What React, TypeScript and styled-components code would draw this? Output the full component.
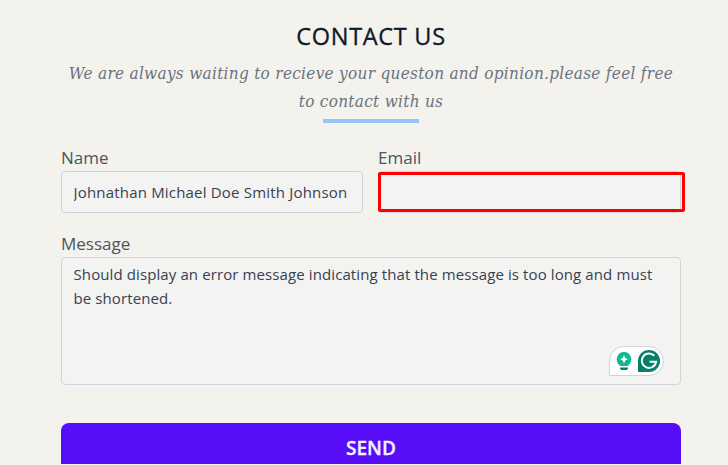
import React from 'react';
import styled, { createGlobalStyle } from 'styled-components';

const GlobalStyle = createGlobalStyle`
  *, *::before, *::after { box-sizing: border-box; }
  body { margin: 0; background: #f3f2ec; overflow: hidden; }
`;

const Page = styled.main`
  height: 464px;
  overflow: hidden;
  padding: 21px 47px 0 61px;
  background: #f3f2ec;
  font-family: 'Open Sans', 'Noto Sans', sans-serif;
`;

const Header = styled.header`
  display: flex;
  flex-direction: column;
  align-items: center;
  height: 126px;
`;

const Title = styled.h1`
  margin: 0;
  font-size: 23.5px;
  font-weight: 500;
  line-height: 30px;
  letter-spacing: 0.7px;
  color: #111827;
  -webkit-text-stroke: 0.3px #111827;
  white-space: nowrap;
`;

const Lead = styled.p`
  margin: 8px 0 0;
  font-family: 'DejaVu Serif Condensed', 'DejaVu Serif', serif;
  font-stretch: condensed;
  font-style: italic;
  font-size: 17px;
  line-height: 28px;
  letter-spacing: 0.3px;
  color: #6b7280;
  text-align: center;
`;

const LeadLine = styled.span`
  display: block;
  white-space: nowrap;
`;

const Underline = styled.div`
  width: 96px;
  height: 4px;
  margin-top: 4px;
  background: #93c5fd;
`;

const Fields = styled.div`
  display: grid;
  grid-template-columns: 302px 303px;
  column-gap: 15px;
  row-gap: 20px;
`;

const Field = styled.div<{ $wide?: boolean }>`
  position: relative;
  grid-column: ${(p) => (p.$wide ? '1 / -1' : 'auto')};
`;

const Label = styled.label`
  display: block;
  height: 24px;
  font-size: 17px;
  line-height: 22px;
  color: #4b5563;
`;

const control = `
  display: block;
  width: 100%;
  border: 1px solid #d1d5db;
  border-radius: 4px;
  background: #f3f3f1;
  color: #374151;
  outline: none;
  font-family: 'Open Sans', 'Noto Sans', sans-serif;
  font-size: 15px;
`;

const Input = styled.input`
  ${control}
  height: 42px;
  padding: 0 11.5px;
  letter-spacing: 0.19px;
`;

const TextArea = styled.textarea`
  ${control}
  height: 128px;
  padding: 4px 11.5px;
  line-height: 24px;
  resize: none;
  overflow: hidden;
  white-space: pre;
  letter-spacing: 0.105px;
`;

const Highlight = styled.div`
  position: absolute;
  left: 0;
  top: 25px;
  width: 307px;
  height: 40px;
  border: 3px solid #fe0000;
  border-radius: 2px;
`;

const Assistant = styled.div`
  position: absolute;
  left: 548px;
  top: 113px;
  width: 55px;
  height: 30px;
  display: flex;
  align-items: center;
  gap: 6px;
  padding-left: 6px;
  border: 1px solid #d1d3de;
  border-radius: 15px 15px 15px 0;
  background: #fff;
`;

const Send = styled.button`
  display: block;
  width: 100%;
  height: 48px;
  margin-top: 38px;
  padding: 0;
  border: 0;
  border-radius: 8px;
  background: #570df8;
  color: #f3f2ff;
  font-family: 'Open Sans', 'Noto Sans', sans-serif;
  font-size: 19px;
  font-weight: 600;
  line-height: 50px;
  -webkit-text-stroke: 0.3px #f3f2ff;
`;

const BulbIcon = () => (
  <svg width="16" height="20" viewBox="0 0 16 20">
    <path d="M8 1a7.4 7.4 0 0 0-4.2 13.4V15h8.4v-.6A7.4 7.4 0 0 0 8 1Z" fill="#0fb792" />
    <path d="M8 4.2 9.3 7 12 8.2 9.3 9.5 8 12.3 6.7 9.5 4 8.2 6.7 7Z" fill="#fff" />
    <path d="M4 16.4h8v1l-1.2 1.7H5.2L4 17.4Z" fill="#087f6b" />
  </svg>
);

const GrammarIcon = () => (
  <svg width="22" height="22" viewBox="0 0 22 22">
    <path d="M0 22V11a11 11 0 1 1 11 11Z" fill="#087f6b" />
    <path
      d="M16.3 5.8A7.2 7.2 0 1 0 18.1 11.8H11.6"
      fill="none"
      stroke="#fff"
      strokeWidth="2"
    />
  </svg>
);

export default function App() {
  return (
    <>
      <GlobalStyle />
      <Page>
        <Header>
          <Title>CONTACT US</Title>
          <Lead>
            <LeadLine>
              We are always waiting to recieve your queston and opinion.please feel free
            </LeadLine>
            <LeadLine>to contact with us</LeadLine>
          </Lead>
          <Underline />
        </Header>
        <Fields>
          <Field>
            <Label htmlFor="name">Name</Label>
            <Input id="name" defaultValue="Johnathan Michael Doe Smith Johnson" />
          </Field>
          <Field>
            <Label htmlFor="email">Email</Label>
            <Input id="email" />
            <Highlight />
          </Field>
          <Field $wide>
            <Label htmlFor="message">Message</Label>
            <TextArea
              id="message"
              spellCheck={false}
              defaultValue={
                'Should display an error message indicating that the message is too long and must\nbe shortened.'
              }
            />
            <Assistant>
              <BulbIcon />
              <GrammarIcon />
            </Assistant>
          </Field>
        </Fields>
        <Send type="button">SEND</Send>
      </Page>
    </>
  );
}
